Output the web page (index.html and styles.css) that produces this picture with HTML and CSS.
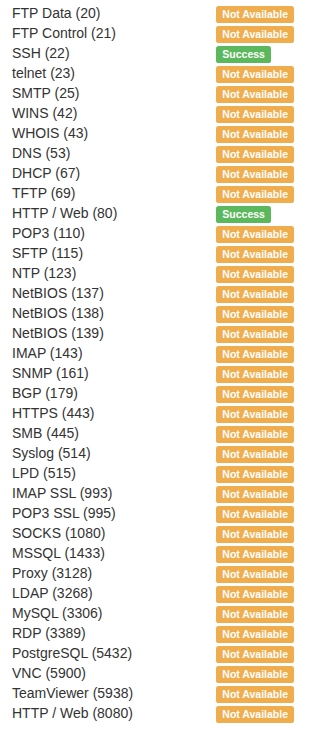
FILE: index.html
```html
<!DOCTYPE html>
<html>
<head>
<meta charset="utf-8">
<link rel="stylesheet" href="styles.css">
</head>
<body>
<div class="ports">
  <div class="row"><span class="name">FTP Data (20)</span><span class="status"><span class="label warn">Not Available</span></span></div>
  <div class="row"><span class="name">FTP Control (21)</span><span class="status"><span class="label warn">Not Available</span></span></div>
  <div class="row"><span class="name">SSH (22)</span><span class="status"><span class="label ok">Success</span></span></div>
  <div class="row"><span class="name">telnet (23)</span><span class="status"><span class="label warn">Not Available</span></span></div>
  <div class="row"><span class="name">SMTP (25)</span><span class="status"><span class="label warn">Not Available</span></span></div>
  <div class="row"><span class="name">WINS (42)</span><span class="status"><span class="label warn">Not Available</span></span></div>
  <div class="row"><span class="name">WHOIS (43)</span><span class="status"><span class="label warn">Not Available</span></span></div>
  <div class="row"><span class="name">DNS (53)</span><span class="status"><span class="label warn">Not Available</span></span></div>
  <div class="row"><span class="name">DHCP (67)</span><span class="status"><span class="label warn">Not Available</span></span></div>
  <div class="row"><span class="name">TFTP (69)</span><span class="status"><span class="label warn">Not Available</span></span></div>
  <div class="row"><span class="name">HTTP / Web (80)</span><span class="status"><span class="label ok">Success</span></span></div>
  <div class="row"><span class="name">POP3 (110)</span><span class="status"><span class="label warn">Not Available</span></span></div>
  <div class="row"><span class="name">SFTP (115)</span><span class="status"><span class="label warn">Not Available</span></span></div>
  <div class="row"><span class="name">NTP (123)</span><span class="status"><span class="label warn">Not Available</span></span></div>
  <div class="row"><span class="name">NetBIOS (137)</span><span class="status"><span class="label warn">Not Available</span></span></div>
  <div class="row"><span class="name">NetBIOS (138)</span><span class="status"><span class="label warn">Not Available</span></span></div>
  <div class="row"><span class="name">NetBIOS (139)</span><span class="status"><span class="label warn">Not Available</span></span></div>
  <div class="row"><span class="name">IMAP (143)</span><span class="status"><span class="label warn">Not Available</span></span></div>
  <div class="row"><span class="name">SNMP (161)</span><span class="status"><span class="label warn">Not Available</span></span></div>
  <div class="row"><span class="name">BGP (179)</span><span class="status"><span class="label warn">Not Available</span></span></div>
  <div class="row"><span class="name">HTTPS (443)</span><span class="status"><span class="label warn">Not Available</span></span></div>
  <div class="row"><span class="name">SMB (445)</span><span class="status"><span class="label warn">Not Available</span></span></div>
  <div class="row"><span class="name">Syslog (514)</span><span class="status"><span class="label warn">Not Available</span></span></div>
  <div class="row"><span class="name">LPD (515)</span><span class="status"><span class="label warn">Not Available</span></span></div>
  <div class="row"><span class="name">IMAP SSL (993)</span><span class="status"><span class="label warn">Not Available</span></span></div>
  <div class="row"><span class="name">POP3 SSL (995)</span><span class="status"><span class="label warn">Not Available</span></span></div>
  <div class="row"><span class="name">SOCKS (1080)</span><span class="status"><span class="label warn">Not Available</span></span></div>
  <div class="row"><span class="name">MSSQL (1433)</span><span class="status"><span class="label warn">Not Available</span></span></div>
  <div class="row"><span class="name">Proxy (3128)</span><span class="status"><span class="label warn">Not Available</span></span></div>
  <div class="row"><span class="name">LDAP (3268)</span><span class="status"><span class="label warn">Not Available</span></span></div>
  <div class="row"><span class="name">MySQL (3306)</span><span class="status"><span class="label warn">Not Available</span></span></div>
  <div class="row"><span class="name">RDP (3389)</span><span class="status"><span class="label warn">Not Available</span></span></div>
  <div class="row"><span class="name">PostgreSQL (5432)</span><span class="status"><span class="label warn">Not Available</span></span></div>
  <div class="row"><span class="name">VNC (5900)</span><span class="status"><span class="label warn">Not Available</span></span></div>
  <div class="row"><span class="name">TeamViewer (5938)</span><span class="status"><span class="label warn">Not Available</span></span></div>
  <div class="row"><span class="name">HTTP / Web (8080)</span><span class="status"><span class="label warn">Not Available</span></span></div>
</div>
</body>
</html>
```

FILE: styles.css
```css
html, body {
  margin: 0;
  padding: 0;
  background: #fff;
}
body {
  font-family: "Liberation Sans", Arial, Helvetica, sans-serif;
  font-size: 14px;
  color: #333;
}
.ports {
  padding: 3px 0 10px 12px;
}
.row {
  display: grid;
  grid-template-columns: 204px auto;
  line-height: 20px;
  height: 20px;
}
.name {
  white-space: nowrap;
}
.label {
  display: inline;
  font-size: 75%;
  font-weight: bold;
  line-height: 1;
  color: #fff;
  padding: .2em .6em .3em;
  border-radius: .25em;
  white-space: nowrap;
  vertical-align: baseline;
}
.warn {
  background-color: #f0ad4e;
}
.ok {
  background-color: #5cb85c;
}
```
